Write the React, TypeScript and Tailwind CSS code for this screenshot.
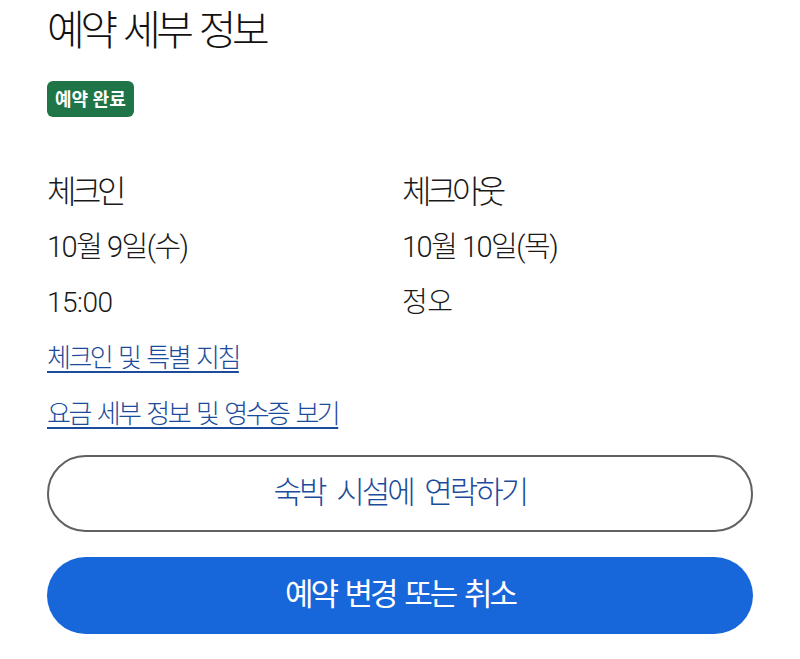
import React from 'react'

const font = "font-['Roboto','Noto_Sans_CJK_KR',sans-serif]"

const InfoCell: React.FC<{label: string; date: string; time: string}> = ({label, date, time}) => (
  <div className="flex flex-col text-[#1a1a1a] font-light">
    <div className="text-[32px] leading-[55px] tracking-[-4.5px]">{label}</div>
    <div className="text-[29px] leading-[55px] tracking-[-1.5px]">{date}</div>
    <div className="text-[28px] leading-[55px] tracking-[-0.5px]">{time}</div>
  </div>
)

const TextLink: React.FC<{label: string}> = ({label}) => (
  <a href="#" className="block w-fit text-[26px] leading-[56px] tracking-[-2.5px] [word-spacing:3px] font-light text-[#1b4c9c] underline decoration-[1.5px] underline-offset-[4px]">
    {label}
  </a>
)

export default function App() {
  return (
    <div className={`w-[800px] h-[659px] bg-white px-[47px] pt-[8px] ${font}`}>
      <h1 className="text-[41px] leading-[46px] tracking-[-4.5px] [word-spacing:4px] font-light text-[#111]">예약 세부 정보</h1>

      <div className="mt-[27px] w-fit h-[36px] px-[8px] rounded-[6px] bg-[#1f7548] flex items-center text-white text-[18px] font-bold">
        예약 완료
      </div>

      <div className="mt-[48px] grid grid-cols-[355px_1fr]">
        <InfoCell label="체크인" date="10월 9일(수)" time="15:00" />
        <InfoCell label="체크아웃" date="10월 10일(목)" time="정오" />
      </div>

      <TextLink label="체크인 및 특별 지침" />
      <TextLink label="요금 세부 정보 및 영수증 보기" />

      <div className="mt-[13px] flex flex-col gap-[25px]">
        <button className="h-[77px] w-full rounded-full border-2 border-[#616161] bg-white text-[31px] tracking-[-3px] [word-spacing:7px] font-light text-[#1b4c9c]">
          숙박 시설에 연락하기
        </button>
        <button className="h-[77px] w-full rounded-full bg-[#1766da] text-[31px] tracking-[-3px] [word-spacing:4px] text-white">
          예약 변경 또는 취소
        </button>
      </div>
    </div>
  )
}
